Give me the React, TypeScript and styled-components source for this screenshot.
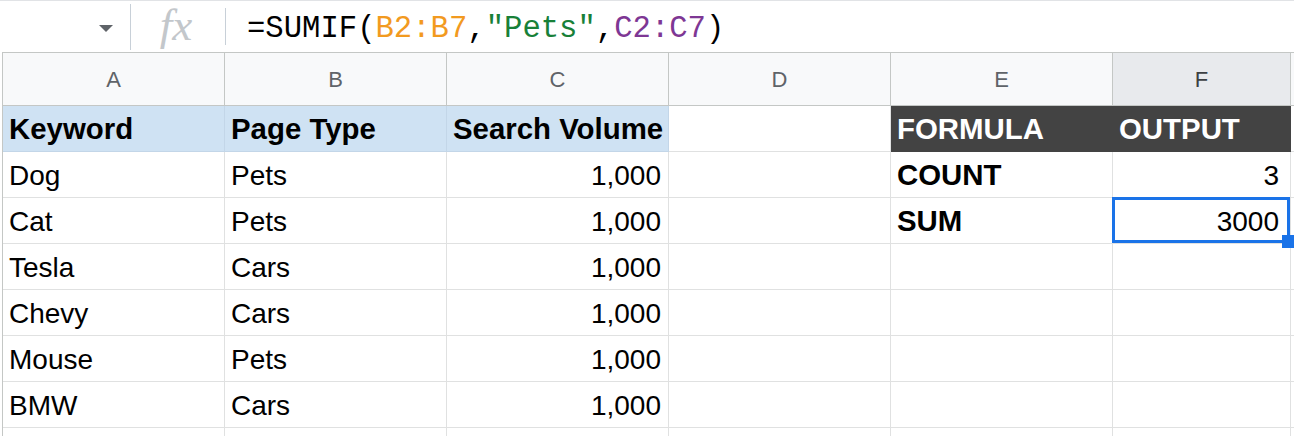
import React from "react";
import styled, { createGlobalStyle } from "styled-components";

const GlobalStyle = createGlobalStyle`
  html, body {
    margin: 0;
    padding: 0;
    background: #ffffff;
    font-family: "Liberation Sans", Arial, sans-serif;
  }
`;

const Page = styled.div`
  width: 1294px;
  height: 436px;
  overflow: hidden;
  background: #ffffff;
`;

const FormulaBar = styled.div`
  display: flex;
  align-items: center;
  height: 51px;
  border-top: 1px solid #e1e3e6;
`;

const NameBox = styled.div`
  width: 130px;
  height: 100%;
  display: flex;
  align-items: center;
  justify-content: flex-end;
  padding-right: 17px;
  box-sizing: border-box;
`;

const DropArrow = styled.div`
  width: 0;
  height: 0;
  border-left: 7px solid transparent;
  border-right: 7px solid transparent;
  border-top: 7px solid #5f6368;
  margin-top: 3px;
`;

const Divider = styled.div<{ $h: number }>`
  width: 1px;
  height: ${(p) => p.$h}px;
  background: #c8d0d8;
`;

const FxBox = styled.div`
  width: 94px;
  display: flex;
  justify-content: center;
  font-family: "Liberation Serif", "Times New Roman", serif;
  font-style: italic;
  font-size: 45px;
  color: #c3c7cb;
  padding-bottom: 4px;
  padding-right: 4px;
  box-sizing: border-box;
`;

const FormulaText = styled.div`
  font-family: "Liberation Mono", "Courier New", monospace;
  font-size: 30.6px;
  color: #000000;
  padding-left: 21px;
  padding-top: 4px;
  white-space: pre;
`;

const Token = styled.span<{ $c: string }>`
  color: ${(p) => p.$c};
`;

const Grid = styled.div`
  display: grid;
  grid-template-columns: repeat(5, 222px) 178px 1fr;
  grid-template-rows: 54px;
  grid-auto-rows: 46px;
  margin-left: 2px;
  border-left: 1px solid #c4c7c5;
`;

const ColHead = styled.div<{ $active?: boolean }>`
  display: flex;
  align-items: center;
  justify-content: center;
  box-sizing: border-box;
  border-top: 1px solid #c4c7c5;
  border-bottom: 1px solid #c4c7c5;
  border-right: 1px solid #c4c7c5;
  background: ${(p) => (p.$active ? "#e8eaed" : "#f8f9fa")};
  color: ${(p) => (p.$active ? "#3c4043" : "#5f6368")};
  font-size: 22px;
  padding-top: 2px;
`;

type Tone = "plain" | "blue" | "dark";

const tones: Record<Tone, { bg: string; fg: string; line: string }> = {
  plain: { bg: "#ffffff", fg: "#000000", line: "#e0e1e1" },
  blue: { bg: "#cfe2f3", fg: "#000000", line: "#c3d6e8" },
  dark: { bg: "#434343", fg: "#ffffff", line: "#434343" },
};

const Cell = styled.div<{
  $tone: Tone;
  $bold?: boolean;
  $right?: boolean;
  $pr?: number;
  $selected?: boolean;
}>`
  position: ${(p) => (p.$selected ? "relative" : "static")};
  display: flex;
  align-items: flex-end;
  justify-content: ${(p) => (p.$right ? "flex-end" : "flex-start")};
  box-sizing: border-box;
  padding: 0 ${(p) => p.$pr ?? 7}px 5px 6px;
  background: ${(p) => tones[p.$tone].bg};
  color: ${(p) => tones[p.$tone].fg};
  border-right: 1px solid ${(p) => tones[p.$tone].line};
  border-bottom: 1px solid ${(p) => tones[p.$tone].line};
  font-size: ${(p) => (p.$bold ? 29.4 : 28)}px;
  font-weight: ${(p) => (p.$bold ? 700 : 400)};
  white-space: nowrap;

  ${(p) =>
    p.$selected &&
    `
    &::after {
      content: "";
      position: absolute;
      left: -1px;
      top: -1px;
      width: 178px;
      height: 46px;
      box-sizing: border-box;
      border: 3px solid #1a73e8;
    }
    &::before {
      content: "";
      position: absolute;
      left: 169px;
      top: 37px;
      width: 12px;
      height: 13px;
      background: #1a73e8;
      z-index: 2;
    }
  `}
`;

type CellData = {
  text?: string;
  tone?: Tone;
  bold?: boolean;
  right?: boolean;
  selected?: boolean;
};

const columns = ["A", "B", "C", "D", "E", "F", ""];

const keywords = [
  ["Dog", "Pets"],
  ["Cat", "Pets"],
  ["Tesla", "Cars"],
  ["Chevy", "Cars"],
  ["Mouse", "Pets"],
  ["BMW", "Cars"],
];

const summary: CellData[][] = [
  [{ text: "COUNT", bold: true }, { text: "3", right: true }],
  [{ text: "SUM", bold: true }, { text: "3000", right: true, selected: true }],
];

const buildRows = (): CellData[][] => {
  const rows: CellData[][] = [
    [
      { text: "Keyword", tone: "blue", bold: true },
      { text: "Page Type", tone: "blue", bold: true },
      { text: "Search Volume", tone: "blue", bold: true },
      {},
      { text: "FORMULA", tone: "dark", bold: true },
      { text: "OUTPUT", tone: "dark", bold: true },
      {},
    ],
  ];
  keywords.forEach(([kw, type], i) => {
    const extra = summary[i] || [{}, {}];
    rows.push([
      { text: kw },
      { text: type },
      { text: "1,000", right: true },
      {},
      extra[0],
      extra[1],
      {},
    ]);
  });
  rows.push([{}, {}, {}, {}, {}, {}, {}]);
  return rows;
};

const App = () => {
  const rows = buildRows();

  return (
    <Page>
      <GlobalStyle />
      <FormulaBar>
        <NameBox>
          <DropArrow />
        </NameBox>
        <Divider $h={46} />
        <FxBox>fx</FxBox>
        <Divider $h={37} />
        <FormulaText>
          =SUMIF(<Token $c="#f29a1f">B2:B7</Token>,
          <Token $c="#188038">"Pets"</Token>,
          <Token $c="#7e3794">C2:C7</Token>)
        </FormulaText>
      </FormulaBar>
      <Grid>
        {columns.map((c) => (
          <ColHead key={c || "g"} $active={c === "F"}>
            {c}
          </ColHead>
        ))}
        {rows.map((row, r) =>
          row.map((cell, c) => (
            <Cell
              key={`${r}-${c}`}
              $tone={cell.tone || "plain"}
              $bold={cell.bold}
              $right={cell.right}
              $pr={c === 5 ? 11 : 7}
              $selected={cell.selected}
            >
              {cell.text}
            </Cell>
          ))
        )}
      </Grid>
    </Page>
  );
};

export default App;
